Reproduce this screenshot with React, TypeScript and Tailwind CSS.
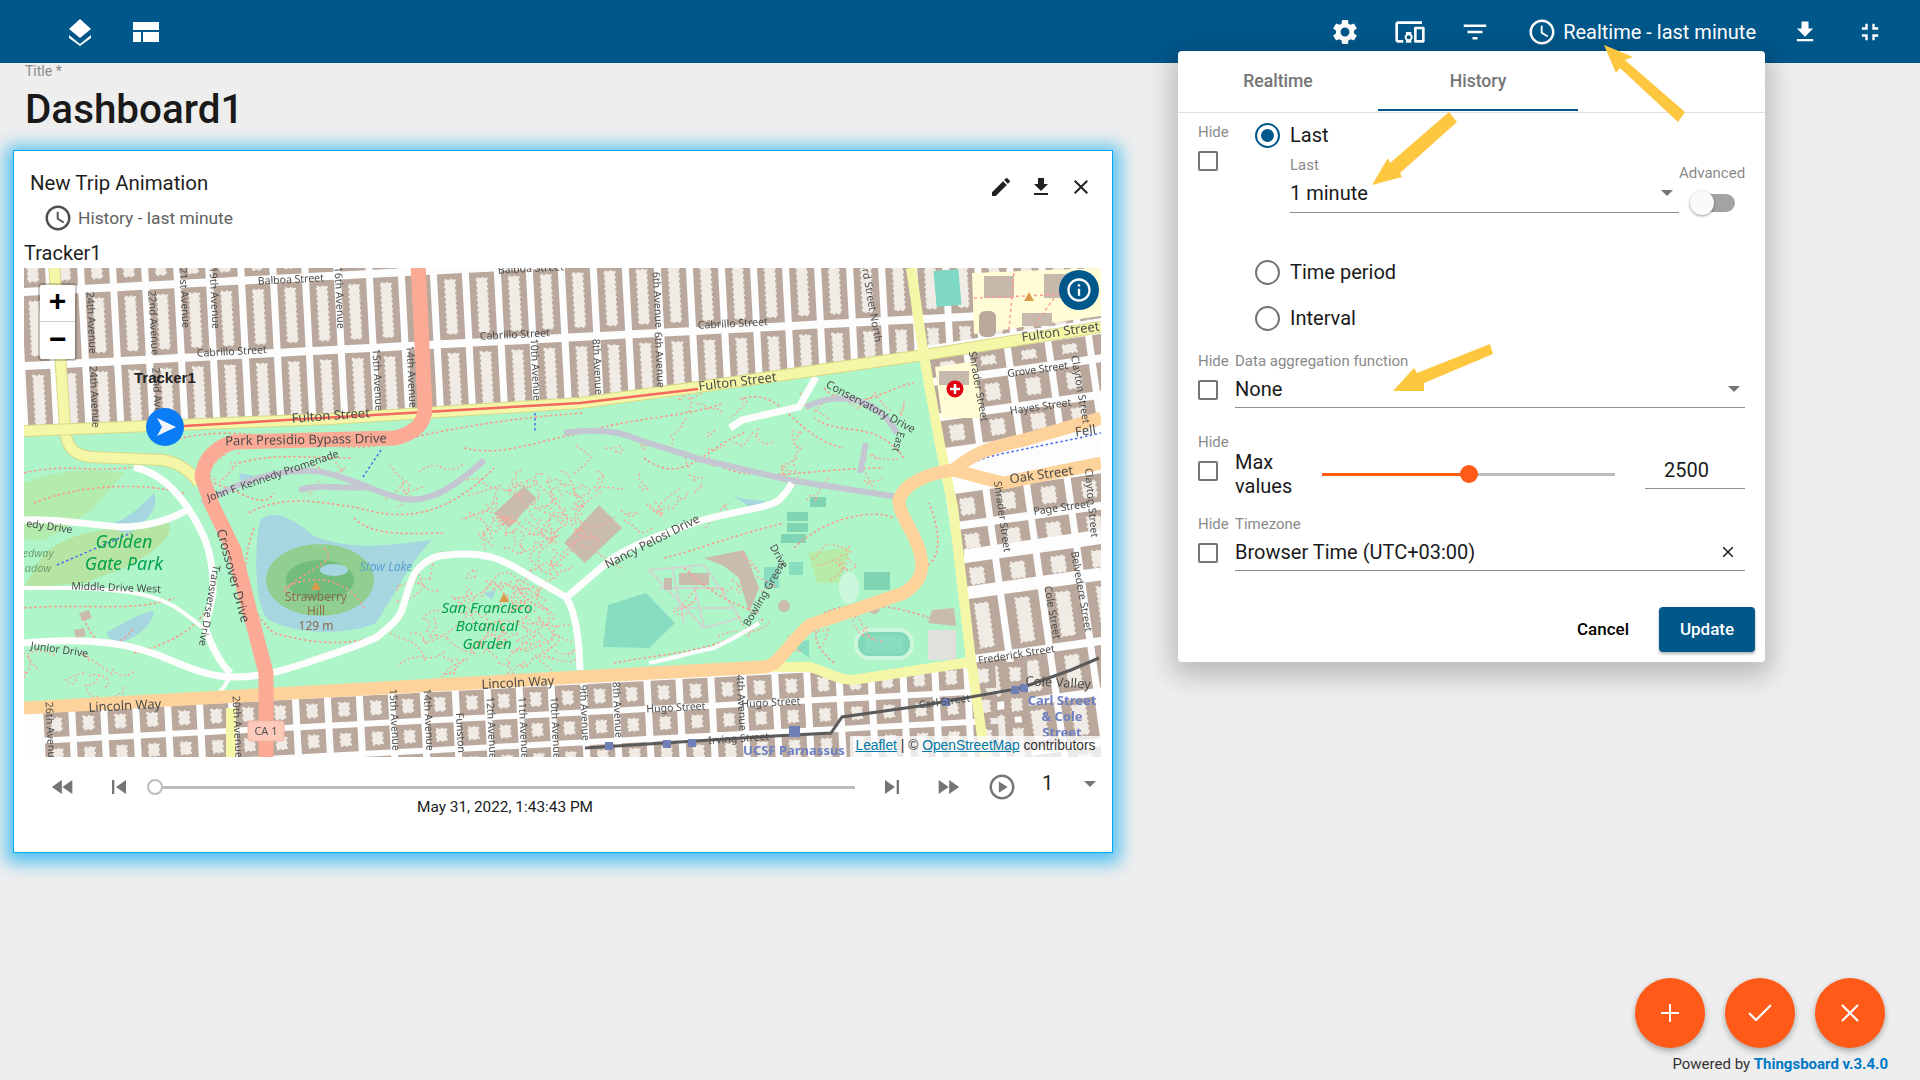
import { ReactNode } from 'react';
import {
  MdClose,
  MdDevicesOther,
  MdEdit,
  MdFastForward,
  MdFastRewind,
  MdFileDownload,
  MdFilterList,
  MdFullscreenExit,
  MdInfoOutline,
  MdOutlineAccessTime,
  MdOutlinePlayCircle,
  MdSettings,
  MdSkipNext,
  MdSkipPrevious,
} from 'react-icons/md';

const range = (from: number, to: number, step: number) => {
  const out: number[] = [];
  for (let v = from; v < to; v += step) out.push(v);
  return out;
};

function BlockGrid({ rows, xs, w, transform }: { rows: number[][]; xs: number[]; w: number; transform: string }) {
  return (
    <g transform={transform}>
      {rows.map(([top, bottom]) =>
        xs.map((x) => (
          <g key={`${top}-${x}`}>
            <rect x={x} y={top} width={w} height={bottom - top} fill="#b9a89b" />
            <rect
              x={x + w * 0.3}
              y={top + 6}
              width={w * 0.4}
              height={Math.max(bottom - top - 12, 2)}
              fill="#f0ebe4"
              stroke="#f0ebe4"
              strokeWidth={2}
              strokeDasharray="2 3"
            />
          </g>
        )),
      )}
    </g>
  );
}

// dotted footpaths scattered over the park, same result on every render
function wiggles(seed: number, cx: number, cy: number, rx: number, ry: number, count: number) {
  let s = seed;
  const rnd = () => {
    s = (s * 16807) % 2147483647;
    return s / 2147483647;
  };
  const out: string[] = [];
  for (let i = 0; i < count; i++) {
    let x = cx + (rnd() - 0.5) * 2 * rx;
    let y = cy + (rnd() - 0.5) * 2 * ry;
    let d = `M${x.toFixed(0)} ${y.toFixed(0)}`;
    for (let j = 0; j < 2; j++) {
      const qx = x + (rnd() - 0.5) * 40;
      const qy = y + (rnd() - 0.5) * 30;
      x = qx + (rnd() - 0.5) * 30;
      y = qy + (rnd() - 0.5) * 24;
      d += ` Q${qx.toFixed(0)} ${qy.toFixed(0)} ${x.toFixed(0)} ${y.toFixed(0)}`;
    }
    out.push(d);
  }
  return out;
}

const footpaths = [
  'M150 172 C230 150 300 190 360 176 S480 150 560 145',
  'M0 205 C40 195 70 205 110 199 M10 235 C60 215 120 215 160 225',
  'M215 195 C250 185 280 190 330 190 M190 215 C230 230 240 240 250 225',
  'M225 245 C260 225 300 235 335 240 C400 260 440 230 470 200',
  'M230 260 C215 300 220 340 250 365 C300 380 360 380 380 345',
  'M330 250 C350 270 390 265 420 265',
  'M0 340 C60 335 110 345 150 330 M60 350 C70 380 90 385 110 360 M110 385 C150 375 170 360 180 345',
  'M440 180 C480 190 520 170 560 165 C600 150 660 150 700 135',
  'M620 190 C660 220 680 180 720 165 M700 200 C740 215 790 200 860 200',
  'M640 290 C680 280 700 270 760 255 M770 280 C800 250 850 240 870 250',
  'M590 395 C640 385 700 385 740 350 M660 300 C690 330 720 340 735 345',
  'M800 345 C830 330 880 340 905 350 M810 395 C780 370 790 350 820 345',
  'M900 300 C920 290 915 260 905 235 M880 190 C850 150 820 170 790 150 M800 120 C830 150 860 120 890 115',
  'M720 130 C760 120 770 170 820 180',
  'M300 280 C320 295 270 305 260 325 M260 320 C300 300 330 320 340 340',
];

const pinkCurves = [
  ...wiggles(77, 470, 350, 70, 45, 70),
  ...wiggles(211, 510, 245, 50, 40, 55),
  ...wiggles(431, 620, 220, 70, 40, 18),
  ...wiggles(907, 770, 170, 110, 50, 22),
  ...wiggles(331, 770, 330, 100, 50, 16),
  ...wiggles(613, 300, 205, 110, 25, 10),
  ...wiggles(59, 70, 400, 70, 20, 8),
];

type Label = [string, number, number, number, number?];

const roadLabels: Label[] = [
  ['Balboa Street', 267, 15, -3],
  ['Balboa Street', 507, 4, -3],
  ['Cabrillo Street', 208, 87, -3],
  ['Cabrillo Street', 491, 70, -3],
  ['Cabrillo Street', 709, 59, -3],
  ['Fulton Street', 307, 152, -4, 13],
  ['Fulton Street', 714, 118, -7, 13],
  ['Fulton Street', 1037, 68, -8, 13],
  ['Park Presidio Bypass Drive', 282, 176, -1, 13],
  ['John F. Kennedy Promenade', 250, 211, -19],
  ['Crossover Drive', 205, 309, 75, 13],
  ['Middle Drive West', 92, 323, 2],
  ['edy Drive', 25, 262, 8],
  ['Junior Drive', 35, 385, 8],
  ['Transverse Drive', 182, 337, 100],
  ['Lincoln Way', 101, 442, -3, 13],
  ['Lincoln Way', 494, 419, -3, 13],
  ['Nancy Pelosi Drive', 630, 277, -27, 12],
  ['Bowling Green', 743, 328, -60],
  ['Drive', 752, 290, 60],
  ['Conservatory Drive', 845, 142, 28, 11],
  ['East', 871, 173, 105],
  ['Oak Street', 1018, 211, -8, 13],
  ['Fell', 1062, 167, -8, 13],
  ['Shrader Street', 951, 119, 80],
  ['Clayton Street', 1053, 122, 80],
  ['Grove Street', 1014, 105, -8],
  ['Hayes Street', 1017, 142, -8],
  ['3rd Street North', 844, 35, 80],
  ['Shrader Street', 975, 249, 82],
  ['Page Street', 1038, 243, -8],
  ['Clayton Street', 1064, 235, 85],
  ['Belvedere Street', 1054, 324, 80],
  ['Cole Street', 1025, 345, 80],
  ['Frederick Street', 993, 390, -9],
  ['Cole Valley', 1034, 419, 3, 13],
  ['Hugo Street', 652, 443, -3],
  ['Hugo Street', 747, 438, -3],
  ['Irving Street', 715, 474, -4],
  ['Carl Street', 921, 437, -8],
  ['24th Avenue', 64, 55, 87],
  ['22nd Avenue', 126, 55, 87],
  ['21st Avenue', 157, 30, 87],
  ['19th Avenue', 187, 30, 87],
  ['16th Avenue', 312, 30, 87],
  ['24th Avenue', 67, 129, 87],
  ['22nd Avenue', 130, 132, 87],
  ['15th Avenue', 350, 112, 87],
  ['14th Avenue', 384, 109, 87],
  ['10th Avenue', 508, 102, 87],
  ['8th Avenue', 570, 99, 87],
  ['6th Avenue', 630, 32, 87],
  ['6th Avenue', 632, 92, 87],
  ['26th Avenue', 23, 465, 87],
  ['20th Avenue', 210, 459, 87],
  ['15th Avenue', 367, 452, 87],
  ['14th Avenue', 401, 452, 87],
  ['Funston', 433, 465, 87],
  ['12th Avenue', 464, 460, 87],
  ['11th Avenue', 496, 460, 87],
  ['10th Avenue', 528, 460, 87],
  ['9th Avenue', 557, 445, 87],
  ['8th Avenue', 590, 442, 87],
  ['4th Avenue', 714, 435, 87],
];

const stops = [
  [585, 478],
  [643, 476],
  [668, 475],
  [922, 434],
  [991, 422],
  [1000, 420],
];

function TileMap() {
  return (
    <svg viewBox="0 0 1077 489" className="block h-[489px] w-[1077px] blur-[0.4px] font-['Noto_Sans',sans-serif]">
      <rect width="1077" height="489" fill="#fdfdfd" />
      <BlockGrid rows={[[-50, 20], [28, 94], [102, 175]]} xs={range(-4, 1100, 32)} w={25} transform="rotate(-3)" />
      <polygon points="890,80 1077,50 1077,489 950,489" fill="#fdfdfd" />
      <BlockGrid
        rows={[[90, 110], [118, 146], [154, 181], [228, 256], [264, 290], [298, 326], [334, 390], [398, 440], [448, 490], [498, 540]]}
        xs={range(893, 1100, 41)}
        w={34}
        transform="rotate(-8 900 0)"
      />
      <BlockGrid rows={[[445, 470], [476, 500], [506, 560]]} xs={range(-4, 980, 32)} w={25} transform="rotate(-3)" />

      {/* university block top right */}
      <polygon points="948,5 1077,0 1077,48 950,66" fill="#fffcd6" />
      <rect x="960" y="8" width="30" height="22" fill="#c7b9ac" />
      <rect x="1020" y="6" width="30" height="24" fill="#c7b9ac" />
      <rect x="955" y="43" width="17" height="26" rx="6" fill="#b9a99b" />
      <rect x="998" y="45" width="30" height="13" fill="#c7b9ac" />
      <path d="M950 30 L1070 25 M990 5 L985 62 M1030 30 L1010 58" stroke="#f99" strokeWidth="1.5" strokeDasharray="3 3" fill="none" />
      <polygon points="1005,24 1000,33 1010,33" fill="#d99a4a" />
      <rect x="911" y="2" width="25" height="36" fill="#7fd9c4" transform="rotate(-5 923 20)" />
      <polygon points="911,99 952,93 958,150 918,150" fill="#fffcd6" />
      <rect x="915" y="103" width="30" height="14" fill="#c7b9ac" />

      {/* park */}
      <polygon
        points="0,163 306,151 556,135 711,114 900,87 947,394 829,412 786,399 750,399 536,410 0,440"
        fill="#aef5c9"
      />
      <path d="M0 215 C40 200 70 200 100 205 L70 240 C40 260 20 280 0 270 Z" fill="#b5eaa8" opacity="0.8" />
      <path d="M20 285 C60 255 110 260 145 255 C150 270 130 285 100 300 L60 315 L0 320 Z" fill="#b6e4a3" />

      {/* water */}
      <path d="M236 252 C250 240 268 250 290 268 C330 285 380 275 408 272 C385 295 375 320 352 355 C330 365 280 370 245 352 C230 340 230 280 236 252 Z" fill="#a6d6df" />
      <ellipse cx="296" cy="312" rx="54" ry="36" fill="#90cf90" />
      <ellipse cx="296" cy="312" rx="34" ry="20" fill="#72bc7c" />
      <ellipse cx="310" cy="302" rx="14" ry="6" fill="#a6d6df" />
      <path d="M85 255 C100 255 115 240 130 225 C135 240 125 250 110 262 C100 268 90 262 85 255 Z" fill="#a6d6df" />
      <path d="M82 365 C100 355 115 345 130 343 C128 360 105 375 90 375 Z" fill="#a6d6df" />
      <path d="M215 205 L230 208 L218 220 Z" fill="#a6d6df" />
      <path d="M705 225 C720 235 740 230 745 235 L730 242 Z" fill="#a6d6df" />
      <path d="M460 325 L472 322 L468 332 Z" fill="#a6d6df" />

      {/* sports grounds and buildings */}
      <polygon points="584,337 622,325 651,355 625,380 579,379" fill="#88dcc0" />
      <rect x="830" y="360" width="60" height="32" rx="15" fill="#cdf7dc" />
      <rect x="834" y="364" width="52" height="24" rx="11" fill="#7fd8b8" />
      <rect x="841" y="368" width="38" height="17" fill="#88dcc0" />
      <rect x="763" y="244" width="21" height="9" fill="#7fd4b4" />
      <rect x="763" y="255" width="21" height="9" fill="#7fd4b4" />
      <rect x="757" y="266" width="25" height="9" fill="#7fd4b4" />
      <rect x="786" y="229" width="16" height="10" fill="#7fd4b4" />
      <rect x="840" y="304" width="26" height="18" fill="#7fd4b4" />
      <rect x="740" y="299" width="15" height="21" fill="#88dcc0" />
      <rect x="765" y="294" width="14" height="13" fill="#88dcc0" />
      <polygon points="765,375 785,372 785,390" fill="#88dcc0" />
      <polygon points="784,285 827,279 815,315 793,315" fill="#b6eba8" />
      <ellipse cx="825" cy="320" rx="10" ry="16" fill="#cdf7dc" />
      <rect x="904" y="362" width="28" height="30" fill="#e0e0dc" />
      <path d="M904 355 L908 342 L930 340 L932 358 Z" fill="#c9bcae" />
      <polygon points="540,275 575,237 598,260 561,295" fill="#c9bcae" />
      <polygon points="470,245 500,218 512,230 485,260" fill="#c9bcae" />
      <path d="M625 302 L680 297 L716 350 L680 360 Z M648 300 L660 355 M665 298 L680 358 M635 320 L700 320 M650 340 L710 340" stroke="#d0d6cf" strokeWidth="2" fill="none" />
      <path d="M680 290 L720 282 L735 320 L725 345 L715 310 L700 298 Z" fill="#c9bcae" />
      <path d="M655 305 h30 v12 h-30 Z M640 310 h8 v12 h-8 Z" fill="#c9bcae" />
      <circle cx="760" cy="338" r="6" fill="#c9bcae" />
      <circle cx="850" cy="340" r="6" fill="#c9bcae" />
      <path d="M55 345 l10 -3 l3 8 l-10 3 Z M50 362 l10 -2 l2 8 l-10 2 Z" fill="#c9bcae" />

      {/* footpaths */}
      {footpaths.map((d) => (
        <path key={d} d={d} fill="none" stroke="#f99a8e" strokeWidth="1.6" strokeDasharray="2.5 2.5" />
      ))}
      {pinkCurves.map((d) => (
        <path key={d} d={d} fill="none" stroke="#f9a79b" strokeWidth="1.4" strokeDasharray="2 2.5" />
      ))}
      <path d="M357 182 L339 209 M511 145 L511 165 M33 297 L107 265 M936 202 C960 185 990 185 1077 165" fill="none" stroke="#4a6ef0" strokeWidth="1.5" strokeDasharray="2.5 2.5" />

      {/* pedestrian and park roads */}
      <path d="M178 235 C215 215 240 205 275 203 C305 200 330 215 371 229 C395 236 420 230 460 192 M275 222 C300 215 320 222 346 219 M615 172 L679 192 L765 212 L829 222 L875 229 M782 139 C810 125 850 125 873 165 M836 205 L842 175 M540 165 C575 160 600 165 615 172" fill="none" stroke="#c4c7d2" strokeWidth="6" />
      <path
        d="M110 199 C135 205 150 220 164 240 C180 265 190 285 189 325 C186 345 180 355 182 362 C190 385 200 400 207 405 M0 252 C30 250 60 256 96 259 C125 259 150 250 167 240 M0 375 C30 372 60 372 85 375 C110 378 125 384 139 389 C165 400 185 409 210 409 C240 409 260 402 282 395 C310 385 330 380 353 369 C370 355 375 350 378 342 C385 320 388 305 396 299 C405 290 415 287 424 287 C440 285 455 286 467 289 C485 294 495 302 507 309 L542 329 C552 345 555 370 556 402 M543 329 L586 292 C610 275 650 262 679 252 C715 242 745 240 755 232 C765 222 766 218 768 215 M792 109 L775 139 L718 152 L706 160"
        fill="none"
        stroke="#fdfdfd"
        strokeWidth="7"
      />
      <path d="M0 320 L50 320 C100 322 135 325 160 345 L182 362 M207 405 C200 425 190 430 175 435 M625 395 C650 390 665 385 690 380 C710 370 720 365 735 355" fill="none" stroke="#fdfdfd" strokeWidth="4" />
      <path d="M940 285 L1077 265 M943 322 L1077 303" fill="none" stroke="#fdfdfd" strokeWidth="7" />

      {/* main roads */}
      <path d="M30 -5 L41 159 C42 180 50 187 67 189 L139 192 C155 195 165 202 175 215" fill="none" stroke="#d9d98a" strokeWidth="12" />
      <path d="M30 -5 L41 159 C42 180 50 187 67 189 L139 192 C155 195 165 202 175 215" fill="none" stroke="#f5f7a8" strokeWidth="10" />
      <path d="M0 163 L306 151 L556 135 L711 114 L900 87 L1077 59" fill="none" stroke="#d9d98a" strokeWidth="12" />
      <path d="M0 163 L306 151 L556 135 L711 114 L900 87 L1077 59" fill="none" stroke="#f5f7a8" strokeWidth="10" />
      <path d="M160 158 L556 135 L674 121" fill="none" stroke="#f4685f" strokeWidth="2.5" />
      <path d="M887 0 L900 89 L915 172 L929 239 L947 392 L961 489 M750 399 L786 399 C805 405 815 412 829 412 L947 394 M207 440 L207 489" fill="none" stroke="#f5f7a8" strokeWidth="10" />
      <path d="M0 440 L536 410 L740 399 C755 398 765 375 786 357 L880 325 C895 315 900 305 897 289 C893 265 875 250 875 232 C880 215 905 205 929 202 L979 215 L1077 195 M929 202 C945 190 958 180 1000 172 L1077 150" fill="none" stroke="#fdd29b" strokeWidth="13" />
      <path d="M394 -5 L401 139 C401 155 392 165 371 170 L210 174 C190 180 180 192 178 209 L189 239 L210 282 L228 352 L242 405 L242 489" fill="none" stroke="#fbaa96" strokeWidth="15" strokeLinejoin="round" />

      {/* tram line */}
      <path d="M561 480 L750 468 L807 465 L818 449 L896 438 L997 420 L1047 402 L1075 390" fill="none" stroke="#5a5a5a" strokeWidth="3" />
      {stops.map(([x, y]) => (
        <rect key={x} x={x - 4} y={y - 4} width="8" height="8" fill="#6f80b8" />
      ))}
      <rect x="765" y="458" width="11" height="11" fill="#6f80b8" />

      {roadLabels.map(([text, x, y, rot, size]) => (
        <text
          key={`${text}${x}`}
          x={x}
          y={y}
          fontSize={size ?? 10.5}
          fill="#4c4c4c"
          textAnchor="middle"
          transform={`rotate(${rot} ${x} ${y})`}
        >
          {text}
        </text>
      ))}
      <g fill="#06a24b" fontStyle="italic" textAnchor="middle">
        <text x="100" y="280" fontSize="18">Golden</text>
        <text x="100" y="302" fontSize="18">Gate Park</text>
        <text x="463" y="345" fontSize="15">San Francisco</text>
        <text x="463" y="363" fontSize="15">Botanical</text>
        <text x="463" y="381" fontSize="15">Garden</text>
        <text x="14" y="289" fontSize="11" fill="#6fa06f">edway</text>
        <text x="14" y="304" fontSize="11" fill="#6fa06f">adow</text>
      </g>
      <text x="362" y="303" fontSize="12" fontStyle="italic" fill="#5a9fd0" textAnchor="middle">Stow Lake</text>
      <g fill="#8b6a4c" fontSize="12" textAnchor="middle">
        <text x="292" y="333">Strawberry</text>
        <text x="292" y="347">Hill</text>
        <text x="292" y="362">129 m</text>
      </g>
      <polygon points="292,313 287,322 297,322" fill="#d99a4a" />
      <polygon points="480,325 475,334 485,334" fill="#d99a4a" />
      <g fill="#6e7fc2" fontWeight="700" textAnchor="middle" fontSize="13">
        <text x="1038" y="437">Carl Street</text>
        <text x="1038" y="453">&amp; Cole</text>
        <text x="1038" y="469">Street</text>
        <text x="770" y="487">UCSF Parnassus</text>
      </g>
      <rect x="224" y="453" width="36" height="20" rx="2" fill="#fdc9bb" stroke="#f5b5a4" />
      <text x="242" y="467" fontSize="11" fill="#555" textAnchor="middle">CA 1</text>

      <circle cx="931" cy="121" r="8.5" fill="#e0000f" />
      <path d="M931 116 v10 M926 121 h10" stroke="#fff" strokeWidth="2.5" />
    </svg>
  );
}

function Checkbox() {
  return <div className="h-[20px] w-[20px] rounded-[2px] border-2 border-[#757575]" />;
}

function Radio({ on, label }: { on?: boolean; label: string }) {
  return (
    <div className="flex h-[25px] items-center gap-[10px]">
      <div
        className={
          on
            ? 'flex h-[25px] w-[25px] items-center justify-center rounded-full border-2 border-[#00578a]'
            : 'flex h-[25px] w-[25px] items-center justify-center rounded-full border-2 border-[#757575]'
        }
      >
        {on && <div className="h-[13px] w-[13px] rounded-full bg-[#00578a]" />}
      </div>
      <span className="-mt-[1px] text-[20px] leading-6 text-[#1a1a1a]">{label}</span>
    </div>
  );
}

function SelectArrow() {
  return <div className="h-0 w-0 border-x-[6px] border-t-[6px] border-x-transparent border-t-[#757575]" />;
}

function HideField({ label, children }: { label?: string; children: ReactNode }) {
  return (
    <div>
      <div className="flex h-[20px] items-center text-[15px] text-[#8a8a8a]">
        <span className="w-[37px]">Hide</span>
        {label && <span>{label}</span>}
      </div>
      <div className="flex">
        <div className="w-[37px] pt-[9px]">
          <Checkbox />
        </div>
        {children}
      </div>
    </div>
  );
}

function TimewindowPopup() {
  return (
    <div className="absolute left-[1178px] top-[51px] z-10 h-[611px] w-[587px] rounded-[4px] bg-white shadow-[0_8px_26px_6px_rgba(0,0,0,0.22)]">
      <div className="flex h-[62px] border-b border-[#e0e0e0] text-[17.6px] font-medium text-[#757575]">
        <div className="flex h-[60px] w-[200px] items-center justify-center pt-[1px]">Realtime</div>
        <div className="flex h-[60px] w-[200px] items-center justify-center border-b-2 border-[#00578a] pt-[2px]">History</div>
      </div>
      <div className="px-[20px] pt-[10px]">
        <div className="flex">
          <div className="w-[57px] text-[15px] text-[#8a8a8a]">
            <div className="mt-[-1px] h-[20px] leading-5">Hide</div>
            <div className="mt-[9px]">
              <Checkbox />
            </div>
          </div>
          <div>
            <Radio on label="Last" />
            <div className="ml-[35px] mt-[7px] flex">
              <div className="w-[389px] border-b border-[#8f8f8f]">
                <div className="h-[20px] text-[15px] leading-5 text-[#8a8a8a]">Last</div>
                <div className="flex h-[37px] items-center justify-between pb-[2px] pr-[6px] text-[20px] text-[#1a1a1a]">
                  <span>1 minute</span>
                  <SelectArrow />
                </div>
              </div>
              <div className="w-[66px] pt-[8px]">
                <div className="h-[20px] text-[15px] leading-5 text-[#8a8a8a]">Advanced</div>
                <div className="relative ml-[11px] mt-[11px] h-[18px] w-[45px]">
                  <div className="absolute right-0 top-0 h-[18px] w-[36px] rounded-full bg-[#a3a3a3]" />
                  <div className="absolute -top-[3px] left-0 h-[24px] w-[24px] rounded-full bg-[#fafafa] shadow-[0_1px_3px_rgba(0,0,0,0.4)]" />
                </div>
              </div>
            </div>
            <div className="mt-[47px]">
              <Radio label="Time period" />
            </div>
            <div className="mt-[21px]">
              <Radio label="Interval" />
            </div>
          </div>
        </div>

        <div className="mt-[20px]">
          <HideField label="Data aggregation function">
            <div className="flex h-[37px] flex-1 items-center justify-between border-b border-[#8f8f8f] pr-[5px] text-[20px] text-[#1a1a1a]">
              <span>None</span>
              <SelectArrow />
            </div>
          </HideField>
        </div>

        <div className="mt-[24px] h-[82px]">
          <HideField>
            <div className="-mt-[2px] w-[87px] text-[20px] leading-6 text-[#1a1a1a]">
              Max
              <br />
              values
            </div>
            <div className="relative mt-[21px] h-[3px] w-[293px] bg-[#bdbdbd]">
              <div className="h-[3px] w-[147px] bg-[#ff5a17]" />
              <div className="absolute left-[138px] top-[-8px] h-[18px] w-[18px] rounded-full bg-[#ff5a17]" />
            </div>
            <div className="ml-[30px] flex h-[37px] w-[100px] items-center justify-center border-b border-[#8f8f8f] pr-[17px] text-[20px] text-[#1a1a1a]">
              2500
            </div>
          </HideField>
        </div>

        <HideField label="Timezone">
          <div className="flex h-[37px] flex-1 items-center justify-between border-b border-[#8f8f8f] pr-[8px] text-[20px] text-[#1a1a1a]">
            <span>Browser Time (UTC+03:00)</span>
            <MdClose size={18} />
          </div>
        </HideField>

        <div className="-mr-[10px] mt-[36px] flex items-center justify-end gap-[16px]">
          <button className="w-[80px] text-center text-[17px] font-medium text-black">Cancel</button>
          <button className="h-[45px] w-[96px] rounded-[4px] bg-[#00578a] text-[17px] font-medium text-white shadow-[0_2px_3px_rgba(0,0,0,0.3)]">
            Update
          </button>
        </div>
      </div>
    </div>
  );
}

function WidgetCard() {
  return (
    <div className="ml-[13px] h-[703px] w-[1100px] border border-[#03a9f4] bg-white shadow-[0_3px_16px_7px_rgba(3,169,244,0.65)]">
      <div className="flex h-[44px] items-start justify-between pl-[16px] pr-[19px] pt-[20px]">
        <div className="h-[24px] text-[20.4px] leading-6 text-[#1f1f1f]">New Trip Animation</div>
        <div className="mt-[4px] flex gap-[16px] text-[#212121]">
          <MdEdit size={24} />
          <MdFileDownload size={24} />
          <MdClose size={24} />
        </div>
      </div>
      <div className="mt-[11px] flex h-[24px] items-center gap-[5px] pl-[29px] text-[17.4px] text-[#616161]">
        <MdOutlineAccessTime size={30} className="shrink-0 text-[#4f4f4f]" />
        <span>History - last minute</span>
      </div>
      <div className="mt-[11px] h-[24px] pl-[10px] text-[20px] leading-6 text-[#1f1f1f]">Tracker1</div>

      <div className="relative ml-[10px] mt-[3px] h-[489px] w-[1077px] overflow-hidden">
        <TileMap />
        <div className="absolute left-[14px] top-[15px] w-[39px] overflow-hidden rounded-[4px] border-2 border-black/20 bg-clip-padding">
          <div className="flex h-[37px] items-center justify-center border-b border-[#ccc] bg-white font-['Liberation_Mono',monospace] text-[30px] font-bold leading-none text-black">
            +
          </div>
          <div className="flex h-[37px] items-center justify-center bg-white font-['Liberation_Mono',monospace] text-[30px] font-bold leading-none text-black">
            −
          </div>
        </div>
        <div className="absolute left-[110px] top-[100px] font-['Liberation_Sans',sans-serif] text-[15px] font-bold leading-5 text-[#222]">
          Tracker1
        </div>
        <div className="absolute left-[122px] top-[140px] flex h-[38px] w-[38px] items-center justify-center rounded-full bg-[#0a7cf5]">
          <svg viewBox="0 0 24 24" className="ml-[2px] h-[24px] w-[24px]">
            <path d="M3 3 L22 12 L3 21 L8 12 Z" fill="#f2f6fb" />
          </svg>
        </div>
        <div className="absolute right-[2px] top-[2px] flex h-[40px] w-[40px] items-center justify-center rounded-full bg-[#00578a] text-white">
          <MdInfoOutline size={28} />
        </div>
        <div className="absolute bottom-0 right-0 flex h-[21px] w-[251px] items-center justify-center bg-white/75 font-['Liberation_Sans',sans-serif] text-[13.8px] text-[#333]">
          <span>
            <span className="text-[#0078a8] underline">Leaflet</span> | © <span className="text-[#0078a8] underline">OpenStreetMap</span> contributors
          </span>
        </div>
      </div>

      <div className="mt-[16px] flex items-start pl-[35px] text-[#757575]">
        <MdFastRewind size={28} />
        <MdSkipPrevious size={28} className="ml-[28px]" />
        <div className="ml-[14px] w-[716px]">
          <div className="relative flex h-[28px] items-center pl-[8px] pr-[8px]">
            <div className="h-[3px] w-full bg-[#bdbdbd]" />
            <div className="absolute left-0 top-[6px] h-[16px] w-[16px] rounded-full border-2 border-[#bdbdbd] bg-white" />
          </div>
          <div className="-mt-[4px] text-center text-[15.4px] leading-5 text-[#212121]">May 31, 2022, 1:43:43 PM</div>
        </div>
        <MdSkipNext size={28} className="ml-[15px]" />
        <MdFastForward size={28} className="ml-[28px]" />
        <MdOutlinePlayCircle size={30} className="-mt-px ml-[25px]" />
        <span className="-mt-[4px] ml-[25px] h-[28px] text-[20px] leading-7 text-[#212121]">1</span>
        <div className="ml-[31px] mt-[8px]">
          <SelectArrow />
        </div>
      </div>
    </div>
  );
}

function Fab({ children }: { children: ReactNode }) {
  return (
    <div className="flex h-[70px] w-[70px] items-center justify-center rounded-full bg-[#ff5a17] text-white shadow-[0_3px_6px_rgba(0,0,0,0.3)]">
      {children}
    </div>
  );
}

function Arrows() {
  return (
    <svg viewBox="0 0 1920 1080" className="pointer-events-none absolute inset-0 z-20 h-[1080px] w-[1920px]">
      <g fill="#fdc73f">
        <polygon points="1604,45 1633,57 1625,60 1685,112 1678,122 1620,68 1616,73" />
        <polygon points="1372,185 1388,158 1390,163 1449,112 1457,122 1400,173 1402,177" />
        <polygon points="1393,391 1414,368 1417,373 1490,344 1493,354 1424,383 1424,391" />
      </g>
    </svg>
  );
}

export default function App() {
  return (
    <div className="relative h-[1080px] w-[1920px] overflow-hidden bg-[#eeeeee] font-['Roboto',sans-serif]">
      <header className="flex h-[63px] items-center bg-[#00578a] text-white">
        <svg viewBox="0 0 24 28" className="ml-[68px] h-[28px] w-[24px]" fill="currentColor">
          <path d="M12 1 L23 11 L12 20 L1 11 Z" />
          <path d="M1 17 L12 26 L23 17 L23 20 L12 28 L1 20 Z" />
        </svg>
        <svg viewBox="0 0 26 20" className="ml-[41px] h-[20px] w-[26px]" fill="currentColor">
          <rect width="26" height="8" />
          <rect y="10" width="8" height="10" />
          <rect x="10" y="10" width="16" height="10" />
        </svg>
        <div className="ml-auto flex items-center">
          <MdSettings size={30} />
          <MdDevicesOther size={32} className="ml-[34px]" />
          <MdFilterList size={30} className="ml-[34px]" />
          <MdOutlineAccessTime size={30} className="ml-[37px]" />
          <span className="ml-[6px] text-[20px]">Realtime - last minute</span>
          <MdFileDownload size={28} className="ml-[35px]" />
          <MdFullscreenExit size={28} className="ml-[37px] mr-[36px]" />
        </div>
      </header>

      <div className="h-[75px] pl-[25px]">
        <div className="h-[16px] text-[14px] leading-4 text-[#8a8a8a]">Title *</div>
        <div className="mt-[7px] text-[40.4px] font-medium leading-[48px] text-[#1a1a1a]">Dashboard1</div>
      </div>

      <div className="pt-[12px]">
        <WidgetCard />
      </div>

      <TimewindowPopup />
      <Arrows />

      <div className="absolute bottom-[32px] right-[35px] flex gap-[20px]">
        <Fab>
          <svg viewBox="0 0 20 20" className="h-[20px] w-[20px]" stroke="currentColor" strokeWidth="2" fill="none">
            <path d="M10 1 V19 M1 10 H19" />
          </svg>
        </Fab>
        <Fab>
          <svg viewBox="0 0 24 20" className="h-[20px] w-[24px]" stroke="currentColor" strokeWidth="2.2" fill="none">
            <path d="M1 10 L8 17 L23 2" />
          </svg>
        </Fab>
        <Fab>
          <svg viewBox="0 0 20 20" className="h-[20px] w-[20px]" stroke="currentColor" strokeWidth="2.2" fill="none">
            <path d="M2 2 L18 18 M18 2 L2 18" />
          </svg>
        </Fab>
      </div>
      <div className="absolute bottom-[6px] right-[32px] text-[15px] leading-5 text-[#333]">
        Powered by <span className="font-bold text-[#0078c8]">Thingsboard v.3.4.0</span>
      </div>
    </div>
  );
}
